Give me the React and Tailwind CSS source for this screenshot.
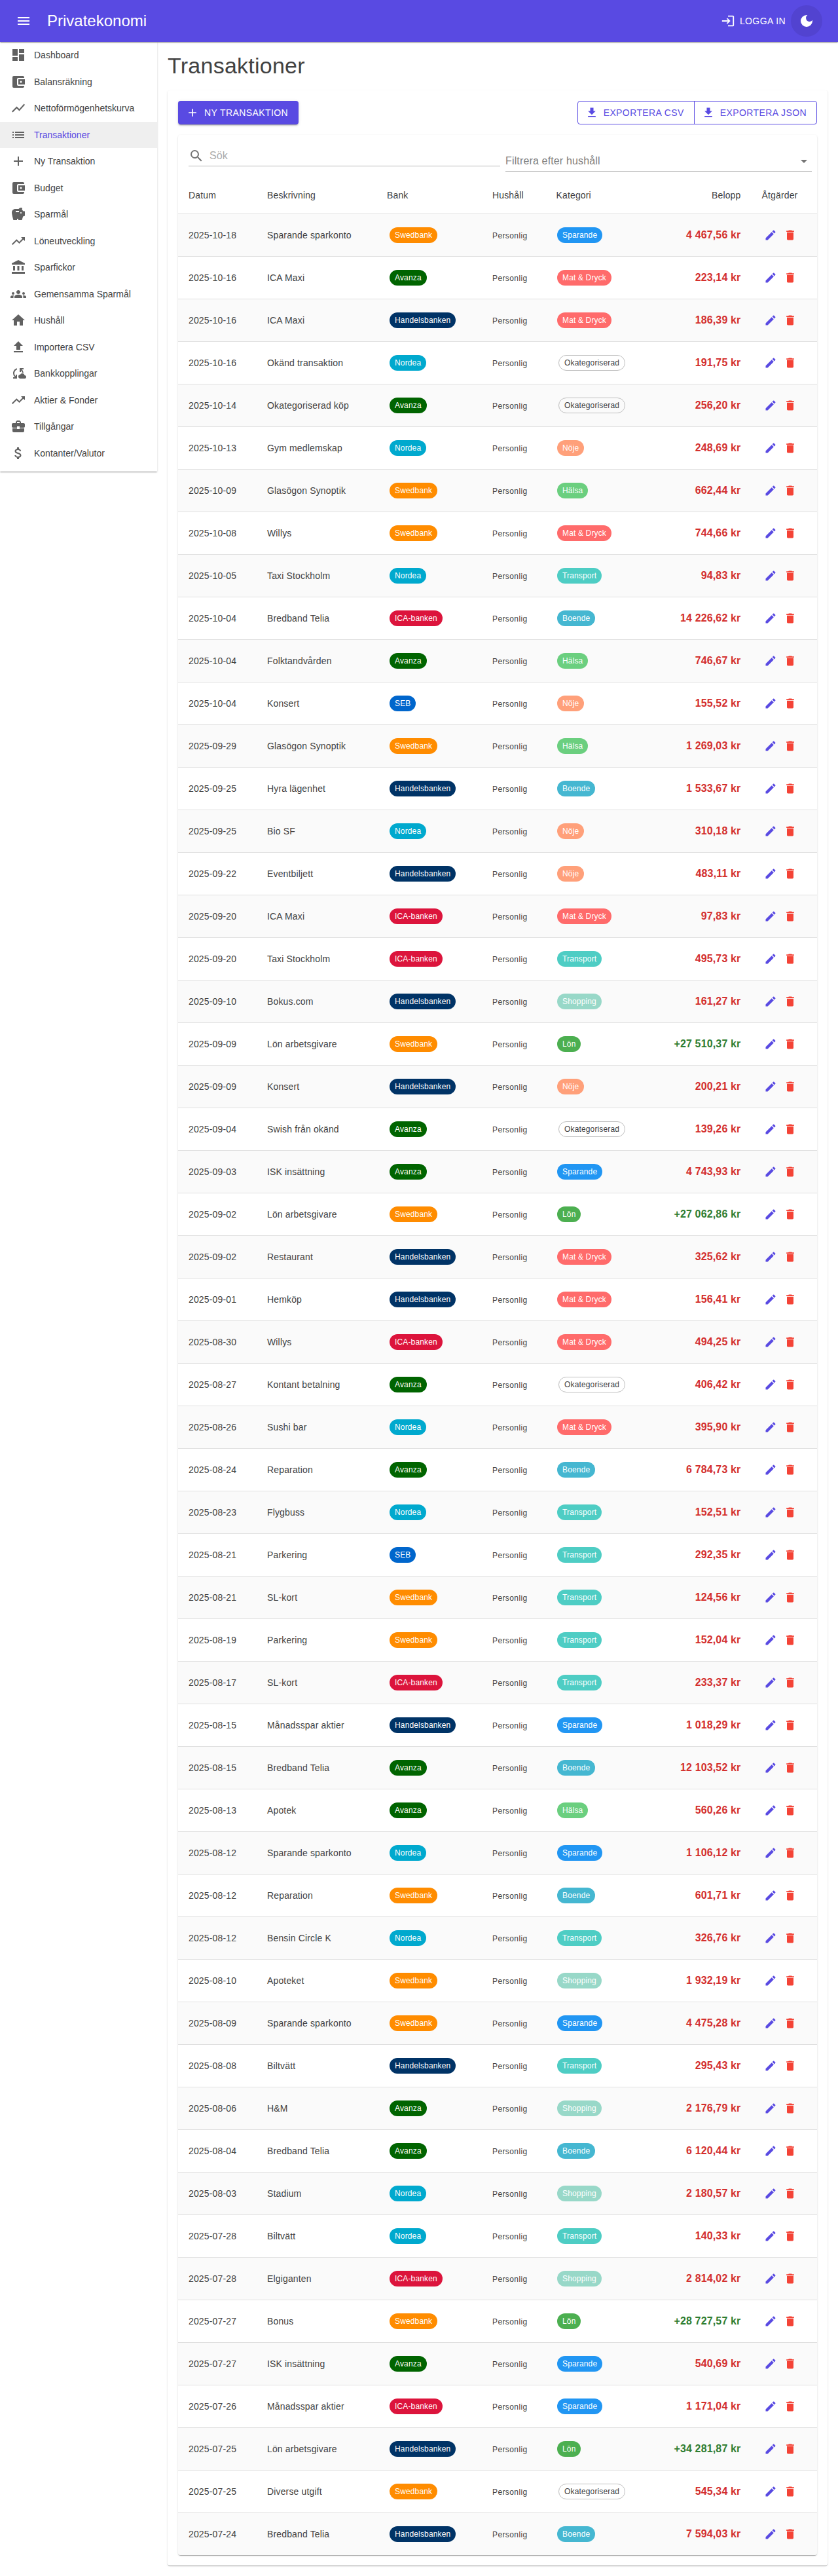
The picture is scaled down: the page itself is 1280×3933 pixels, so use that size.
import React from "react";
import {
  MdMenu, MdDashboard, MdAccountBalanceWallet, MdShowChart, MdList, MdAdd, MdSavings, MdTrendingUp,
  MdAccountBalance, MdGroups, MdHome, MdFileUpload, MdCloudSync, MdBusinessCenter, MdAttachMoney,
  MdLogin, MdDarkMode, MdFileDownload, MdSearch, MdArrowDropDown, MdEdit, MdDelete,
} from "react-icons/md";

const ELEVATION =
  "shadow-[0_2px_1px_-1px_rgba(0,0,0,0.2),0_1px_1px_0_rgba(0,0,0,0.14),0_1px_3px_0_rgba(0,0,0,0.12)]";

const NAV = [
  ["Dashboard", MdDashboard],
  ["Balansräkning", MdAccountBalanceWallet],
  ["Nettoförmögenhetskurva", MdShowChart],
  ["Transaktioner", MdList],
  ["Ny Transaktion", MdAdd],
  ["Budget", MdAccountBalanceWallet],
  ["Sparmål", MdSavings],
  ["Löneutveckling", MdTrendingUp],
  ["Sparfickor", MdAccountBalance],
  ["Gemensamma Sparmål", MdGroups],
  ["Hushåll", MdHome],
  ["Importera CSV", MdFileUpload],
  ["Bankkopplingar", MdCloudSync],
  ["Aktier & Fonder", MdTrendingUp],
  ["Tillgångar", MdBusinessCenter],
  ["Kontanter/Valutor", MdAttachMoney],
];

const BANKS = {
  Swedbank: "bg-[#ff8c00]",
  Avanza: "bg-[#006400]",
  Handelsbanken: "bg-[#003366]",
  Nordea: "bg-[#00a9ce]",
  "ICA-banken": "bg-[#dc143c]",
  SEB: "bg-[#0066cc]",
};

const CATEGORIES = {
  Sparande: "bg-[#2196f3]",
  "Mat & Dryck": "bg-[#ff6b6b]",
  Nöje: "bg-[#ffa07a]",
  Hälsa: "bg-[#6bcf7f]",
  Transport: "bg-[#4ecdc4]",
  Boende: "bg-[#45b7d1]",
  Shopping: "bg-[#98d8c8]",
  Lön: "bg-[#4caf50]",
};

const ROWS = [
  ["2025-10-18", "Sparande sparkonto", "Swedbank", "Sparande", "4 467,56"],
  ["2025-10-16", "ICA Maxi", "Avanza", "Mat & Dryck", "223,14"],
  ["2025-10-16", "ICA Maxi", "Handelsbanken", "Mat & Dryck", "186,39"],
  ["2025-10-16", "Okänd transaktion", "Nordea", "", "191,75"],
  ["2025-10-14", "Okategoriserad köp", "Avanza", "", "256,20"],
  ["2025-10-13", "Gym medlemskap", "Nordea", "Nöje", "248,69"],
  ["2025-10-09", "Glasögon Synoptik", "Swedbank", "Hälsa", "662,44"],
  ["2025-10-08", "Willys", "Swedbank", "Mat & Dryck", "744,66"],
  ["2025-10-05", "Taxi Stockholm", "Nordea", "Transport", "94,83"],
  ["2025-10-04", "Bredband Telia", "ICA-banken", "Boende", "14 226,62"],
  ["2025-10-04", "Folktandvården", "Avanza", "Hälsa", "746,67"],
  ["2025-10-04", "Konsert", "SEB", "Nöje", "155,52"],
  ["2025-09-29", "Glasögon Synoptik", "Swedbank", "Hälsa", "1 269,03"],
  ["2025-09-25", "Hyra lägenhet", "Handelsbanken", "Boende", "1 533,67"],
  ["2025-09-25", "Bio SF", "Nordea", "Nöje", "310,18"],
  ["2025-09-22", "Eventbiljett", "Handelsbanken", "Nöje", "483,11"],
  ["2025-09-20", "ICA Maxi", "ICA-banken", "Mat & Dryck", "97,83"],
  ["2025-09-20", "Taxi Stockholm", "ICA-banken", "Transport", "495,73"],
  ["2025-09-10", "Bokus.com", "Handelsbanken", "Shopping", "161,27"],
  ["2025-09-09", "Lön arbetsgivare", "Swedbank", "Lön", "+27 510,37"],
  ["2025-09-09", "Konsert", "Handelsbanken", "Nöje", "200,21"],
  ["2025-09-04", "Swish från okänd", "Avanza", "", "139,26"],
  ["2025-09-03", "ISK insättning", "Avanza", "Sparande", "4 743,93"],
  ["2025-09-02", "Lön arbetsgivare", "Swedbank", "Lön", "+27 062,86"],
  ["2025-09-02", "Restaurant", "Handelsbanken", "Mat & Dryck", "325,62"],
  ["2025-09-01", "Hemköp", "Handelsbanken", "Mat & Dryck", "156,41"],
  ["2025-08-30", "Willys", "ICA-banken", "Mat & Dryck", "494,25"],
  ["2025-08-27", "Kontant betalning", "Avanza", "", "406,42"],
  ["2025-08-26", "Sushi bar", "Nordea", "Mat & Dryck", "395,90"],
  ["2025-08-24", "Reparation", "Avanza", "Boende", "6 784,73"],
  ["2025-08-23", "Flygbuss", "Nordea", "Transport", "152,51"],
  ["2025-08-21", "Parkering", "SEB", "Transport", "292,35"],
  ["2025-08-21", "SL-kort", "Swedbank", "Transport", "124,56"],
  ["2025-08-19", "Parkering", "Swedbank", "Transport", "152,04"],
  ["2025-08-17", "SL-kort", "ICA-banken", "Transport", "233,37"],
  ["2025-08-15", "Månadsspar aktier", "Handelsbanken", "Sparande", "1 018,29"],
  ["2025-08-15", "Bredband Telia", "Avanza", "Boende", "12 103,52"],
  ["2025-08-13", "Apotek", "Avanza", "Hälsa", "560,26"],
  ["2025-08-12", "Sparande sparkonto", "Nordea", "Sparande", "1 106,12"],
  ["2025-08-12", "Reparation", "Swedbank", "Boende", "601,71"],
  ["2025-08-12", "Bensin Circle K", "Nordea", "Transport", "326,76"],
  ["2025-08-10", "Apoteket", "Swedbank", "Shopping", "1 932,19"],
  ["2025-08-09", "Sparande sparkonto", "Swedbank", "Sparande", "4 475,28"],
  ["2025-08-08", "Biltvätt", "Handelsbanken", "Transport", "295,43"],
  ["2025-08-06", "H&M", "Avanza", "Shopping", "2 176,79"],
  ["2025-08-04", "Bredband Telia", "Avanza", "Boende", "6 120,44"],
  ["2025-08-03", "Stadium", "Nordea", "Shopping", "2 180,57"],
  ["2025-07-28", "Biltvätt", "Nordea", "Transport", "140,33"],
  ["2025-07-28", "Elgiganten", "ICA-banken", "Shopping", "2 814,02"],
  ["2025-07-27", "Bonus", "Swedbank", "Lön", "+28 727,57"],
  ["2025-07-27", "ISK insättning", "Avanza", "Sparande", "540,69"],
  ["2025-07-26", "Månadsspar aktier", "ICA-banken", "Sparande", "1 171,04"],
  ["2025-07-25", "Lön arbetsgivare", "Handelsbanken", "Lön", "+34 281,87"],
  ["2025-07-25", "Diverse utgift", "Swedbank", "", "545,34"],
  ["2025-07-24", "Bredband Telia", "Handelsbanken", "Boende", "7 594,03"],
];

const COLUMNS =
  "grid grid-cols-[120px_183px_161px_97.5px_298px_100.5px] pl-4 items-center text-sm leading-6 tracking-[0.01071em]";

function Chip({ color, children }) {
  return (
    <span className={`inline-flex h-6 items-center rounded-xl px-2 text-xs leading-none text-white ${color}`}>
      {children}
    </span>
  );
}

function AppBar() {
  return (
    <header className={`relative z-20 flex h-16 items-center bg-[#594ae2] pl-6 pr-6 text-white ${ELEVATION}`}>
      <MdMenu size={24} />
      <h5 className="ml-6 text-2xl leading-8">Privatekonomi</h5>
      <div className="ml-auto flex items-center">
        <MdLogin size={22} />
        <span className="ml-[7px] text-sm tracking-[0.02857em]">LOGGA IN</span>
        <span className="ml-2 flex size-12 items-center justify-center rounded-full bg-[#5243d0]">
          <MdDarkMode size={24} />
        </span>
      </div>
    </header>
  );
}

function Sidebar() {
  return (
    <nav className={`relative z-10 h-[656px] w-60 shrink-0 bg-white ${ELEVATION}`}>
      {NAV.map(([label, Icon]) => {
        const active = label === "Transaktioner";
        return (
          <a key={label} className={`flex h-[40.5px] items-center px-4 ${active ? "bg-[#efefef]" : ""}`}>
            <Icon size={24} className="shrink-0 text-[#616161]" />
            <span className={`ml-3 text-sm leading-[24.5px] ${active ? "text-[#594ae2]" : ""}`}>{label}</span>
          </a>
        );
      })}
    </nav>
  );
}

function Actions() {
  return (
    <div className="flex h-9 items-center justify-between text-sm tracking-[0.02857em]">
      <button className="flex h-9 items-center rounded bg-[#594ae2] pl-3 pr-4 text-white shadow-[0_3px_1px_-2px_rgba(0,0,0,0.2),0_2px_2px_0_rgba(0,0,0,0.14),0_1px_5px_0_rgba(0,0,0,0.12)]">
        <MdAdd size={20} className="mr-2" />
        NY TRANSAKTION
      </button>
      <div className="flex h-9 rounded border border-[#594ae2] text-[#594ae2]">
        <button className="flex items-center border-r border-[#594ae2] pl-[11px] pr-[15px]">
          <MdFileDownload size={20} className="mr-2" />
          EXPORTERA CSV
        </button>
        <button className="flex items-center pl-[11px] pr-[15px]">
          <MdFileDownload size={20} className="mr-2" />
          EXPORTERA JSON
        </button>
      </div>
    </div>
  );
}

function Filters() {
  return (
    <div className="flex h-16 gap-2 pl-4 pr-2 text-base tracking-[0.00938em]">
      <div className="mt-4 flex h-8 w-[476px] items-center border-b border-[#b5b5b5]">
        <MdSearch size={24} className="text-[#757575]" />
        <span className="ml-2 text-[#ababab]">Sök</span>
      </div>
      <div className="mt-6 flex h-8 flex-1 items-center border-b border-[#b5b5b5] text-[#7f7f7f]">
        <span className="flex-1">Filtrera efter hushåll</span>
        <MdArrowDropDown size={24} className="text-[#757575]" />
      </div>
    </div>
  );
}

function Row({ row, striped, last }) {
  const [date, text, bank, category, amount] = row;
  const income = amount.startsWith("+");
  return (
    <div
      className={`${COLUMNS} ${last ? "h-16 rounded-b" : "h-[65px] border-b border-[#e0e0e0]"} ${striped ? "bg-[#fafafa]" : ""}`}
    >
      <span>{date}</span>
      <span>{text}</span>
      <span className="ml-1 flex">
        <Chip color={BANKS[bank]}>{bank}</Chip>
      </span>
      <span className="pt-px text-xs tracking-[0.03333em]">Personlig</span>
      <div className="flex items-center justify-between">
        {category ? (
          <span className="ml-[1.5px] flex">
            <Chip color={CATEGORIES[category]}>{category}</Chip>
          </span>
        ) : (
          <span className="ml-[3.5px] inline-flex h-6 items-center rounded-xl border border-[#bdbdbd] px-2 text-xs leading-none">
            Okategoriserad
          </span>
        )}
        <span
          className={`mr-4 text-base font-bold tracking-[0.00938em] ${income ? "text-[#2e7d32]" : "text-[#d32f2f]"}`}
        >
          {amount} kr
        </span>
      </div>
      <span className="flex items-center gap-2.5 pl-[19px]">
        <MdEdit size={20} className="text-[#594ae2]" />
        <MdDelete size={20} className="text-[#f44336]" />
      </span>
    </div>
  );
}

export default function App() {
  return (
    <div className="min-h-[3933px] w-[1280px] bg-white font-['Liberation_Sans',Arial,sans-serif] text-[#424242]">
      <AppBar />
      <div className="flex items-start">
        <Sidebar />
        <main className="min-w-0 flex-1 p-4">
          <h4 className="mb-[18px] text-[34px] leading-[40px] tracking-[0.00735em]">Transaktioner</h4>
          <div className={`rounded p-4 ${ELEVATION}`}>
            <Actions />
            <div className={`mt-4 rounded ${ELEVATION}`}>
              <Filters />
              <div className={`${COLUMNS} h-[57px] border-b border-[#e0e0e0]`}>
                <span>Datum</span>
                <span>Beskrivning</span>
                <span>Bank</span>
                <span>Hushåll</span>
                <div className="flex justify-between pr-4">
                  <span>Kategori</span>
                  <span>Belopp</span>
                </div>
                <span className="pl-4">Åtgärder</span>
              </div>
              {ROWS.map((row, i) => (
                <Row key={i} row={row} striped={i % 2 === 0} last={i === ROWS.length - 1} />
              ))}
            </div>
          </div>
        </main>
      </div>
    </div>
  );
}
